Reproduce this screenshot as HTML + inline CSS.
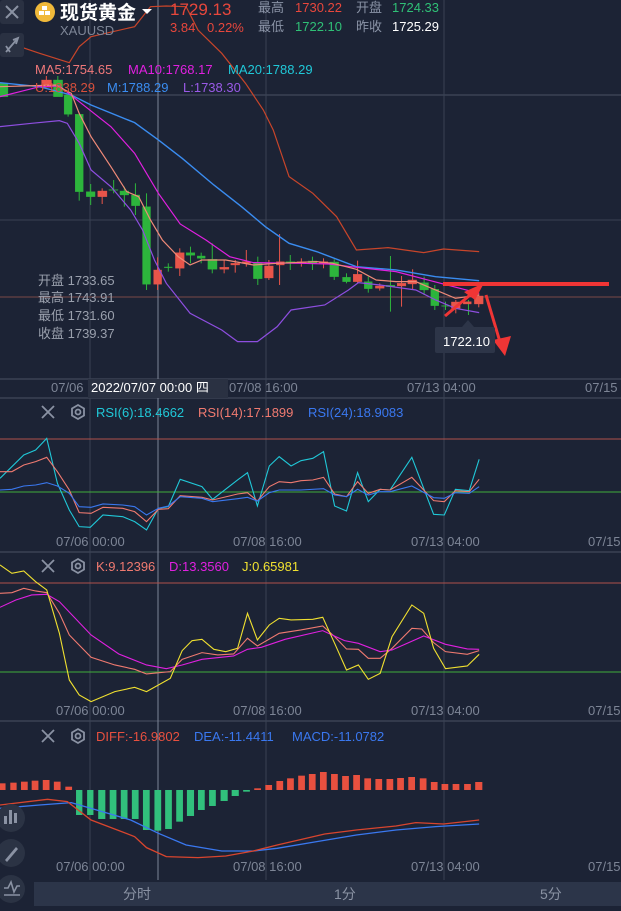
<!DOCTYPE html>
<html><head><meta charset="utf-8"><style>
html,body{margin:0;padding:0;background:#1c2335;width:621px;height:911px;overflow:hidden}
svg{display:block}
text{font-family:"Liberation Sans","Noto Sans CJK SC",sans-serif}
.nv{vector-effect:non-scaling-stroke;fill:none}
</style></head><body>
<svg width="621" height="911" viewBox="0 0 621 911" xmlns="http://www.w3.org/2000/svg">
<rect width="621" height="911" fill="#1c2335"/>
<g stroke="#3a4253" stroke-width="1">
<line x1="0" y1="95" x2="621" y2="95" stroke="#4a5263"/>
<line x1="0" y1="220" x2="621" y2="220"/>
<line x1="0" y1="379" x2="621" y2="379" stroke="#4a5263"/>
<line x1="0" y1="398" x2="621" y2="398" stroke="#4a5263"/>
<line x1="0" y1="552" x2="621" y2="552" stroke="#4a5263"/>
<line x1="0" y1="721" x2="621" y2="721" stroke="#4a5263"/>
<line x1="90" y1="0" x2="90" y2="880"/>
<line x1="266" y1="0" x2="266" y2="880"/>
<line x1="444" y1="0" x2="444" y2="880"/>
</g>
<line x1="0" y1="297" x2="621" y2="297" stroke="#7a4a48" stroke-width="1"/>
<line x1="158" y1="0" x2="158" y2="880" stroke="#7c8496" stroke-width="1"/>
<line x1="0" y1="439" x2="621" y2="439" stroke="#b0504a"/>
<line x1="0" y1="492" x2="621" y2="492" stroke="#3fae3a"/>
<line x1="0" y1="583" x2="621" y2="583" stroke="#b0504a"/>
<line x1="0" y1="672" x2="621" y2="672" stroke="#3fae3a"/>

<g transform="translate(0,70) scale(0.396,0.3333)">
<polyline class="nv" stroke="#c8452a" stroke-width="1.2" points="0,-90 100,-50 175,-22 200,-70 230,-100 340,-130 380,-190 420,-192 470,-190 500,-120 560,-50 620,40 665,120 690,180 730,320 790,370 850,440 900,540 980,533 1070,548 1120,537 1210,545"/>
<g fill="#2db53c" stroke="#2db53c">
<rect x="0" y="40" width="20" height="40"/>
<rect x="135" y="30" width="23" height="50"/><line class="nv" x1="146" y1="18" x2="146" y2="30"/>
<rect x="162" y="75" width="20" height="58"/><line class="nv" x1="172" y1="133" x2="172" y2="140"/>
<rect x="190" y="133" width="20" height="232"/><line class="nv" x1="200" y1="365" x2="200" y2="392"/>
<rect x="218" y="365" width="22" height="15"/><line class="nv" x1="229" y1="342" x2="229" y2="405"/>
<rect x="275" y="359" width="23" height="2"/><line class="nv" x1="287" y1="330" x2="287" y2="370"/>
<rect x="303" y="363" width="22" height="12"/><line class="nv" x1="314" y1="350" x2="314" y2="410"/>
<rect x="332" y="375" width="21" height="32"/><line class="nv" x1="342" y1="340" x2="342" y2="435"/>
<rect x="360" y="410" width="20" height="233"/><line class="nv" x1="370" y1="370" x2="370" y2="660"/>
<rect x="415" y="591" width="20" height="2"/><line class="nv" x1="425" y1="580" x2="425" y2="605"/>
<rect x="470" y="548" width="22" height="8"/><line class="nv" x1="481" y1="530" x2="481" y2="580"/>
<rect x="498" y="558" width="20" height="7"/><line class="nv" x1="508" y1="548" x2="508" y2="580"/>
<rect x="525" y="568" width="23" height="30"/><line class="nv" x1="536" y1="520" x2="536" y2="610"/>
<rect x="640" y="578" width="22" height="48"/><line class="nv" x1="651" y1="560" x2="651" y2="645"/>
<rect x="722" y="575" width="23" height="5"/><line class="nv" x1="733" y1="555" x2="733" y2="600"/>
<rect x="778" y="573" width="22" height="7"/><line class="nv" x1="789" y1="560" x2="789" y2="600"/>
<rect x="833" y="576" width="22" height="44"/><line class="nv" x1="844" y1="568" x2="844" y2="630"/>
<rect x="865" y="622" width="20" height="13"/><line class="nv" x1="875" y1="610" x2="875" y2="640"/>
<rect x="920" y="635" width="20" height="21"/><line class="nv" x1="930" y1="620" x2="930" y2="668"/>
<rect x="975" y="646" width="22" height="4"/><line class="nv" x1="986" y1="558" x2="986" y2="725"/>
<rect x="1060" y="638" width="22" height="22"/><line class="nv" x1="1071" y1="620" x2="1071" y2="675"/>
<rect x="1088" y="658" width="20" height="49"/><line class="nv" x1="1098" y1="645" x2="1098" y2="720"/>
<rect x="1115" y="707" width="20" height="2"/><line class="nv" x1="1125" y1="695" x2="1125" y2="720"/>
<line class="nv" x1="1183" y1="690" x2="1183" y2="735"/>
</g>
<g fill="#e8554a" stroke="#e8554a">
<rect x="105" y="30" width="25" height="22"/><line class="nv" x1="117" y1="18" x2="117" y2="52"/>
<rect x="247" y="363" width="23" height="17"/><line class="nv" x1="258" y1="355" x2="258" y2="402"/>
<rect x="388" y="600" width="20" height="43"/><line class="nv" x1="398" y1="562" x2="398" y2="660"/>
<rect x="443" y="548" width="22" height="47"/><line class="nv" x1="454" y1="535" x2="454" y2="618"/>
<rect x="555" y="592" width="23" height="6"/><line class="nv" x1="566" y1="570" x2="566" y2="610"/>
<rect x="583" y="580" width="22" height="5"/><line class="nv" x1="594" y1="570" x2="594" y2="608"/>
<rect x="612" y="575" width="21" height="5"/><line class="nv" x1="622" y1="540" x2="622" y2="590"/>
<rect x="668" y="588" width="22" height="36"/><line class="nv" x1="679" y1="570" x2="679" y2="630"/>
<rect x="698" y="575" width="20" height="10"/><line class="nv" x1="706" y1="492" x2="706" y2="645"/>
<rect x="750" y="575" width="23" height="3"/><line class="nv" x1="761" y1="565" x2="761" y2="590"/>
<rect x="806" y="575" width="22" height="5"/><line class="nv" x1="817" y1="565" x2="817" y2="595"/>
<rect x="892" y="613" width="22" height="22"/><line class="nv" x1="903" y1="572" x2="903" y2="640"/>
<rect x="948" y="648" width="22" height="7"/><line class="nv" x1="959" y1="640" x2="959" y2="662"/>
<rect x="1003" y="640" width="22" height="8"/><line class="nv" x1="1014" y1="618" x2="1014" y2="710"/>
<rect x="1030" y="630" width="22" height="12"/><line class="nv" x1="1042" y1="598" x2="1042" y2="660"/>
<rect x="1140" y="696" width="22" height="19"/><line class="nv" x1="1151" y1="690" x2="1151" y2="730"/>
<rect x="1170" y="695" width="20" height="7"/>
<rect x="1198" y="678" width="22" height="24"/><line class="nv" x1="1209" y1="670" x2="1209" y2="712"/>
</g>
<polyline class="nv" stroke="#3a8cf0" stroke-width="1.4" points="0,38 100,50 180,75 230,105 340,158 400,210 460,265 540,345 610,410 670,470 730,520 800,545 900,590 1000,600 1100,620 1210,632"/>
<polyline class="nv" stroke="#e020e0" stroke-width="1.2" points="0,80 50,65 100,50 150,48 200,95 280,170 340,250 400,370 455,462 520,510 580,560 640,578 760,580 830,582 900,592 1000,605 1080,630 1210,670"/>
<polyline class="nv" stroke="#f08a78" stroke-width="1.2" points="0,50 140,45 180,70 200,130 230,200 280,290 320,365 350,380 380,450 410,510 450,560 480,585 510,570 570,570 640,585 700,580 800,575 840,580 900,598 950,630 1000,635 1050,635 1090,655 1150,685 1210,675"/>
<polyline class="nv" stroke="#8e4ee0" stroke-width="1.2" points="0,170 80,160 150,152 170,160 200,220 230,300 280,350 330,420 360,480 390,570 420,640 480,730 560,780 600,815 650,815 700,770 735,720 820,705 880,660 905,638 960,645 1050,660 1100,690 1150,715 1210,728"/>
</g>

<line x1="443" y1="284" x2="609" y2="284" stroke="#f03535" stroke-width="4"/>
<line x1="445" y1="316" x2="476" y2="290" stroke="#f03535" stroke-width="3"/>
<polygon points="484,283 464,292 475,300" fill="#f03535"/>
<line x1="486" y1="295" x2="500" y2="342" stroke="#f03535" stroke-width="3"/>
<polygon points="505,356 493,340 511,336" fill="#f03535"/>
<polygon points="468,320 462,327 474,327" fill="#2d3548"/>
<rect x="435" y="327" width="60" height="26" rx="2" fill="#2d3548"/>
<text x="443" y="346" font-size="13" fill="#ffffff">1722.10</text>

<rect x="0" y="0" width="24" height="24" rx="3" fill="#2a3142"/>
<path d="M6 6 L18 18 M18 6 L6 18" stroke="#8a92a3" stroke-width="2"/>
<rect x="0" y="33" width="24" height="24" rx="3" fill="#2a3142"/>
<path d="M6 52 L18 38 M13 40 L18 38 L16 44 M6 46 L10 52" stroke="#8a92a3" stroke-width="1.8" fill="none"/>
<circle cx="45" cy="12" r="10" fill="#f0b93a"/>
<rect x="39" y="11" width="5" height="4" fill="#fff"/><rect x="45" y="11" width="5" height="4" fill="#fff"/><rect x="42" y="6" width="5" height="4" fill="#fff"/>
<text x="60" y="19" font-size="19" font-weight="bold" fill="#ffffff">现货黄金</text>
<polygon points="142,9 152,9 147,14" fill="#fff"/>
<text x="60" y="35" font-size="13" fill="#7d8596">XAUUSD</text>
<text x="170" y="15" font-size="17" fill="#e8473c">1729.13</text>
<text x="170" y="32" font-size="13" fill="#e8473c">3.84</text>
<text x="207" y="32" font-size="13" fill="#e8473c">0.22%</text>
<text x="258" y="12" font-size="13" fill="#8a93a6">最高</text>
<text x="295" y="12" font-size="13" fill="#e8473c">1730.22</text>
<text x="356" y="12" font-size="13" fill="#8a93a6">开盘</text>
<text x="392" y="12" font-size="13" fill="#2fc076">1724.33</text>
<text x="258" y="31" font-size="13" fill="#8a93a6">最低</text>
<text x="295" y="31" font-size="13" fill="#2fc076">1722.10</text>
<text x="356" y="31" font-size="13" fill="#8a93a6">昨收</text>
<text x="392" y="31" font-size="13" fill="#ffffff">1725.29</text>

<text x="35" y="74" font-size="13" fill="#f0787a">MA5:1754.65</text>
<text x="128" y="74" font-size="13" fill="#e020e0">MA10:1768.17</text>
<text x="228" y="74" font-size="13" fill="#20c8d8">MA20:1788.29</text>
<text x="35" y="92" font-size="13" fill="#d8503c">U:1838.29</text>
<text x="107" y="92" font-size="13" fill="#3a8cf0">M:1788.29</text>
<text x="183" y="92" font-size="13" fill="#9a5ae8">L:1738.30</text>

<g font-size="13" fill="#9aa0ad">
<text x="38" y="285">开盘 1733.65</text>
<text x="38" y="302">最高 1743.91</text>
<text x="38" y="320">最低 1731.60</text>
<text x="38" y="338">收盘 1739.37</text>
</g>

<g font-size="13" fill="#7d8596">
<text x="51" y="392">07/06</text>
<text x="229" y="392">07/08 16:00</text>
<text x="407" y="392">07/13 04:00</text>
<text x="585" y="392">07/15</text>
</g>
<rect x="88" y="379" width="140" height="19" fill="#2a3142"/>
<text x="91" y="392" font-size="13" fill="#ffffff">2022/07/07 00:00 四</text>

<g transform="translate(0,400) scale(0.396,0.3333)">
<polyline class="nv" stroke="#20c8d8" stroke-width="1.1" points="0,235 60,165 90,150 118,115 145,250 175,330 200,380 228,382 260,345 310,350 340,365 370,390 400,325 425,320 455,238 510,260 537,298 600,240 625,218 650,318 680,198 705,170 735,198 760,182 790,175 817,155 845,318 875,333 903,218 930,305 960,268 985,270 1040,172 1095,343 1122,345 1150,268 1185,272 1210,178"/>
<polyline class="nv" stroke="#f07a70" stroke-width="1.1" points="0,215 30,215 60,195 90,185 118,172 145,215 175,270 200,338 230,340 260,322 310,325 340,335 370,365 400,328 425,326 455,287 510,292 537,300 600,282 625,278 650,303 680,260 705,245 735,248 760,242 790,240 817,232 845,282 875,290 903,245 930,280 960,268 985,270 1040,232 1095,302 1122,305 1150,272 1185,275 1210,238"/>
<polyline class="nv" stroke="#3a78f0" stroke-width="1.1" points="0,270 30,268 60,258 90,255 118,248 145,258 175,280 200,320 230,322 260,312 310,315 340,320 370,345 400,325 425,318 455,290 510,295 537,305 600,296 625,292 650,303 680,278 705,270 760,270 817,266 845,285 875,290 903,268 930,285 960,275 985,275 1040,258 1095,293 1122,295 1150,278 1185,280 1210,260"/>
</g>
<g transform="translate(0,400) scale(0.396,0.3333)">
<polyline class="nv" stroke="#f07a70" stroke-width="1.1" points="0,580 30,578 60,565 90,573 118,578 150,640 175,705 230,772 290,795 340,808 370,822 430,815 460,778 510,758 550,765 590,762 625,715 650,738 705,700 760,690 815,678 845,710 875,747 905,748 930,775 960,775 990,745 1040,685 1065,687 1095,728 1125,755 1180,763 1210,752"/>
<polyline class="nv" stroke="#e020e0" stroke-width="1.1" points="0,622 40,600 80,585 118,583 150,605 230,705 300,762 370,795 420,806 460,795 510,778 590,768 625,748 660,742 720,718 815,692 870,722 905,730 960,755 990,750 1070,708 1125,733 1180,747 1210,748"/>
<polyline class="nv" stroke="#f0e030" stroke-width="1.1" points="0,495 30,520 60,513 90,545 118,570 150,700 175,840 200,885 230,905 290,875 340,862 370,875 430,835 460,752 485,722 510,718 540,748 570,755 600,745 625,640 650,720 680,675 705,655 735,660 790,658 815,652 845,730 875,810 905,795 930,838 960,820 990,710 1040,615 1070,640 1095,745 1125,806 1180,798 1210,763"/>
</g>

<g transform="translate(0,720) scale(0.396,0.3333)">
<g fill="#e8503f">
<rect x="0" y="190" width="14" height="20"/><rect x="26" y="188" width="16" height="22"/><rect x="53" y="185" width="17" height="25"/><rect x="80" y="182" width="17" height="28"/><rect x="108" y="180" width="17" height="30"/><rect x="136" y="185" width="17" height="25"/><rect x="165" y="200" width="17" height="10"/>
<rect x="642" y="205" width="17" height="5"/><rect x="670" y="195" width="17" height="15"/><rect x="698" y="183" width="17" height="27"/><rect x="725" y="175" width="17" height="35"/><rect x="753" y="167" width="17" height="43"/><rect x="780" y="162" width="17" height="48"/><rect x="808" y="156" width="17" height="54"/><rect x="836" y="162" width="17" height="48"/><rect x="864" y="168" width="17" height="42"/><rect x="892" y="165" width="17" height="45"/><rect x="920" y="175" width="17" height="35"/><rect x="948" y="177" width="17" height="33"/><rect x="976" y="177" width="17" height="33"/><rect x="1003" y="174" width="17" height="36"/><rect x="1031" y="171" width="17" height="39"/><rect x="1060" y="175" width="17" height="35"/><rect x="1088" y="186" width="17" height="24"/><rect x="1115" y="192" width="17" height="18"/><rect x="1143" y="192" width="17" height="18"/><rect x="1172" y="192" width="17" height="18"/><rect x="1200" y="186" width="18" height="24"/>
</g>
<g fill="#31c07c">
<rect x="192" y="210" width="16" height="75"/><rect x="220" y="210" width="16" height="75"/><rect x="248" y="210" width="18" height="87"/><rect x="277" y="210" width="17" height="87"/><rect x="305" y="210" width="17" height="87"/><rect x="333" y="210" width="17" height="87"/><rect x="361" y="210" width="17" height="120"/><rect x="390" y="210" width="17" height="122"/><rect x="417" y="210" width="17" height="117"/><rect x="445" y="210" width="17" height="95"/><rect x="472" y="210" width="18" height="78"/><rect x="500" y="210" width="17" height="60"/><rect x="528" y="210" width="17" height="48"/><rect x="557" y="210" width="18" height="33"/><rect x="585" y="210" width="18" height="18"/><rect x="614" y="210" width="17" height="5"/>
</g>
<polyline class="nv" stroke="#3a78f0" stroke-width="1.3" points="0,265 100,255 180,248 230,265 330,300 400,340 470,375 560,393 640,393 700,385 800,365 900,345 1000,330 1100,320 1210,312"/>
<polyline class="nv" stroke="#d8452e" stroke-width="1.3" points="0,255 120,238 170,245 230,300 340,350 370,383 420,410 500,413 570,408 640,393 700,375 820,342 900,330 1000,318 1050,308 1120,312 1210,300"/>
</g>

<g stroke="#8a92a3" stroke-width="1.8" fill="none">
<path d="M42 406 L54 418 M54 406 L42 418"/>
<path d="M42 560 L54 572 M54 560 L42 572"/>
<path d="M42 730 L54 742 M54 730 L42 742"/>
<polygon points="78,405 84,408.5 84,415.5 78,419 72,415.5 72,408.5"/><circle cx="78" cy="412" r="2.5"/>
<polygon points="78,559 84,562.5 84,569.5 78,573 72,569.5 72,562.5"/><circle cx="78" cy="566" r="2.5"/>
<polygon points="78,729 84,732.5 84,739.5 78,743 72,739.5 72,732.5"/><circle cx="78" cy="736" r="2.5"/>
</g>
<text x="96" y="417" font-size="13" fill="#20c8d8">RSI(6):18.4662</text>
<text x="198" y="417" font-size="13" fill="#f07a70">RSI(14):17.1899</text>
<text x="308" y="417" font-size="13" fill="#3a78f0">RSI(24):18.9083</text>
<text x="96" y="571" font-size="13" fill="#f07a70">K:9.12396</text>
<text x="169" y="571" font-size="13" fill="#e020e0">D:13.3560</text>
<text x="242" y="571" font-size="13" fill="#f0e030">J:0.65981</text>
<text x="96" y="741" font-size="13" fill="#e8503f">DIFF:-16.9802</text>
<text x="194" y="741" font-size="13" fill="#3a78f0">DEA:-11.4411</text>
<text x="292" y="741" font-size="13" fill="#3a78f0">MACD:-11.0782</text>

<g font-size="13" fill="#7d8596">
<text x="56" y="546">07/06 00:00</text><text x="233" y="546">07/08 16:00</text><text x="411" y="546">07/13 04:00</text><text x="588" y="546">07/15</text>
<text x="56" y="715">07/06 00:00</text><text x="233" y="715">07/08 16:00</text><text x="411" y="715">07/13 04:00</text><text x="588" y="715">07/15</text>
<text x="56" y="871">07/06 00:00</text><text x="233" y="871">07/08 16:00</text><text x="411" y="871">07/13 04:00</text><text x="588" y="871">07/15</text>
</g>

<circle cx="11" cy="818" r="14" fill="#2b3344"/>
<g fill="#8a92a3"><rect x="4" y="816" width="3" height="8"/><rect x="9" y="810" width="3" height="14"/><rect x="14" y="813" width="3" height="10"/></g>
<circle cx="11" cy="853" r="14" fill="#2b3344"/>
<path d="M5 860 L16 847 L18 849 L7 862 Z" fill="#8a92a3"/>
<circle cx="11" cy="889" r="14" fill="#2b3344"/>
<path d="M4 888 L8 888 L11 882 L14 892 L17 886 L20 886 M4 895 L20 895" stroke="#8a92a3" stroke-width="1.6" fill="none"/>

<rect x="34" y="882" width="587" height="24" fill="#2c3549"/>
<g font-size="14" fill="#8a92a3">
<text x="123" y="899">分时</text><text x="334" y="899">1分</text><text x="540" y="899">5分</text>
</g>
</svg>
</body></html>
